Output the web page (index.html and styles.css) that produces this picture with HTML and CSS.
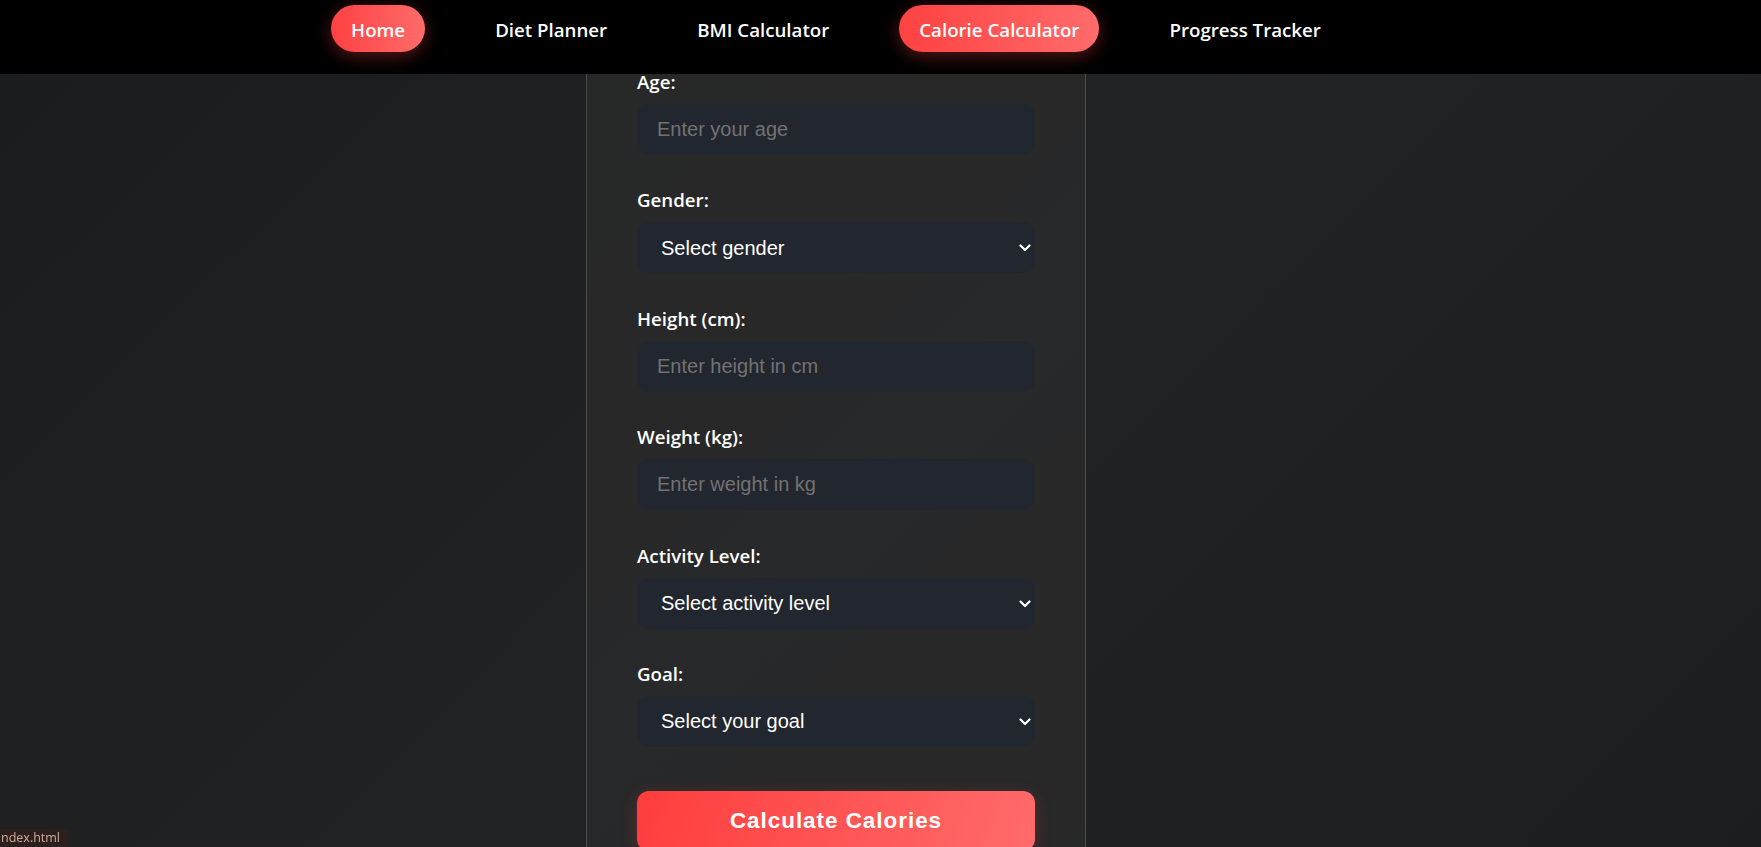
FILE: index.html
```html
<!DOCTYPE html>
<html lang="en">
<head>
<meta charset="UTF-8">
<title>Calorie Calculator</title>
<link rel="stylesheet" href="styles.css">
</head>
<body>
<nav class="navbar">
  <ul class="nav-links">
    <li><a class="nav-link active" href="#">Home</a></li>
    <li><a class="nav-link" href="#">Diet Planner</a></li>
    <li><a class="nav-link" href="#">BMI Calculator</a></li>
    <li><a class="nav-link active" href="#">Calorie Calculator</a></li>
    <li><a class="nav-link" href="#">Progress Tracker</a></li>
  </ul>
</nav>

<main class="page">
  <form class="card">
    <div class="group">
      <label class="label" for="age">Age:</label>
      <input class="field" id="age" type="number" placeholder="Enter your age">
    </div>
    <div class="group">
      <label class="label" for="gender">Gender:</label>
      <div class="select-wrap">
        <select class="field select" id="gender">
          <option>Select gender</option>
          <option>Male</option>
          <option>Female</option>
        </select>
        <svg class="chevron" width="12" height="8" viewBox="0 0 12 8"><polyline points="1.5,1.5 6,6 10.5,1.5" fill="none" stroke="#ffffff" stroke-width="2.2" stroke-linecap="round" stroke-linejoin="round"/></svg>
      </div>
    </div>
    <div class="group">
      <label class="label" for="height">Height (cm):</label>
      <input class="field" id="height" type="number" placeholder="Enter height in cm">
    </div>
    <div class="group">
      <label class="label" for="weight">Weight (kg):</label>
      <input class="field" id="weight" type="number" placeholder="Enter weight in kg">
    </div>
    <div class="group">
      <label class="label" for="activity">Activity Level:</label>
      <div class="select-wrap">
        <select class="field select" id="activity">
          <option>Select activity level</option>
          <option>Sedentary</option>
          <option>Lightly active</option>
          <option>Moderately active</option>
          <option>Very active</option>
        </select>
        <svg class="chevron" width="12" height="8" viewBox="0 0 12 8"><polyline points="1.5,1.5 6,6 10.5,1.5" fill="none" stroke="#ffffff" stroke-width="2.2" stroke-linecap="round" stroke-linejoin="round"/></svg>
      </div>
    </div>
    <div class="group">
      <label class="label" for="goal">Goal:</label>
      <div class="select-wrap">
        <select class="field select" id="goal">
          <option>Select your goal</option>
          <option>Lose weight</option>
          <option>Maintain weight</option>
          <option>Gain weight</option>
        </select>
        <svg class="chevron" width="12" height="8" viewBox="0 0 12 8"><polyline points="1.5,1.5 6,6 10.5,1.5" fill="none" stroke="#ffffff" stroke-width="2.2" stroke-linecap="round" stroke-linejoin="round"/></svg>
      </div>
    </div>
    <button class="calc-btn" type="button">Calculate Calories</button>
  </form>
</main>

<div class="status-bubble">ndex.html</div>
</body>
</html>
```

FILE: styles.css
```css
* {
  box-sizing: border-box;
}

html, body {
  margin: 0;
  padding: 0;
}

body {
  background: linear-gradient(135deg, #1b1c1e 0%, #212224 50%, #1c1d1f 100%);
  color: #ffffff;
  font-family: "Open Sans", "Noto Sans", sans-serif;
  min-height: 847px;
  overflow: hidden;
}

/* ---------- navbar ---------- */
.navbar {
  position: fixed;
  top: 0;
  left: 0;
  right: 0;
  height: 74px;
  background: #000000;
  z-index: 10;
}

.nav-links {
  list-style: none;
  margin: 0;
  padding: 5px 0 0 0;
  width: 1672px;
  display: flex;
  justify-content: center;
  gap: 50px;
}

.nav-link {
  display: block;
  padding: 13px 20px 10px;
  border-radius: 30px;
  color: #ffffff;
  text-decoration: none;
  font-size: 18.7px;
  font-weight: 600;
  line-height: 24px;
  white-space: nowrap;
}

.nav-link.active {
  background: linear-gradient(90deg, #ff4141 0%, #ff6b6b 100%);
  box-shadow: 0 4px 18px rgba(255, 65, 65, 0.35);
}

/* ---------- page ---------- */
.page {
  width: 1672px;
  display: flex;
  justify-content: center;
  padding-top: 20px;
}

.card {
  width: 500px;
  padding: 49px 50px 40px;
  background: rgba(48, 48, 48, 0.55);
  border: 1px solid #4a4a4a;
  border-radius: 16px;
  min-height: 900px;
}

.group {
  margin-bottom: 33.4px;
}

.label {
  display: block;
  font-size: 18.7px;
  font-weight: 600;
  line-height: 24px;
  margin-bottom: 10px;
  color: #ffffff;
}

.field {
  display: block;
  width: 100%;
  height: 51px;
  padding: 0 20px;
  border: none;
  border-radius: 12px;
  background: #22262e;
  color: #ffffff;
  font-family: "Liberation Sans", Arial, sans-serif;
  font-size: 20px;
  outline: none;
}

.field::placeholder {
  color: #727272;
}

.select-wrap {
  position: relative;
}

.select {
  appearance: none;
  -webkit-appearance: none;
  padding: 0 30px 0 24px;
}

.chevron {
  position: absolute;
  right: 4px;
  top: 22px;
  pointer-events: none;
}

.calc-btn {
  display: block;
  width: 100%;
  margin-top: 44.5px;
  padding: 17px 0;
  border: none;
  border-radius: 12px;
  background: linear-gradient(110deg, #ff3d3d 0%, #ff6b6b 100%);
  color: #ffffff;
  font-family: "Liberation Sans", Arial, sans-serif;
  font-size: 22.4px;
  font-weight: 700;
  letter-spacing: 1px;
  box-shadow: 0 4px 15px rgba(255, 65, 65, 0.25);
}

/* ---------- browser status bubble ---------- */
.status-bubble {
  position: fixed;
  left: 0;
  bottom: 0;
  height: 18px;
  width: 70px;
  padding-left: 1px;
  background: #2c201f;
  border-top-right-radius: 4px;
  font-family: "Open Sans", sans-serif;
  font-size: 12.5px;
  line-height: 18px;
  color: #d2aa98;
  white-space: nowrap;
}
```
